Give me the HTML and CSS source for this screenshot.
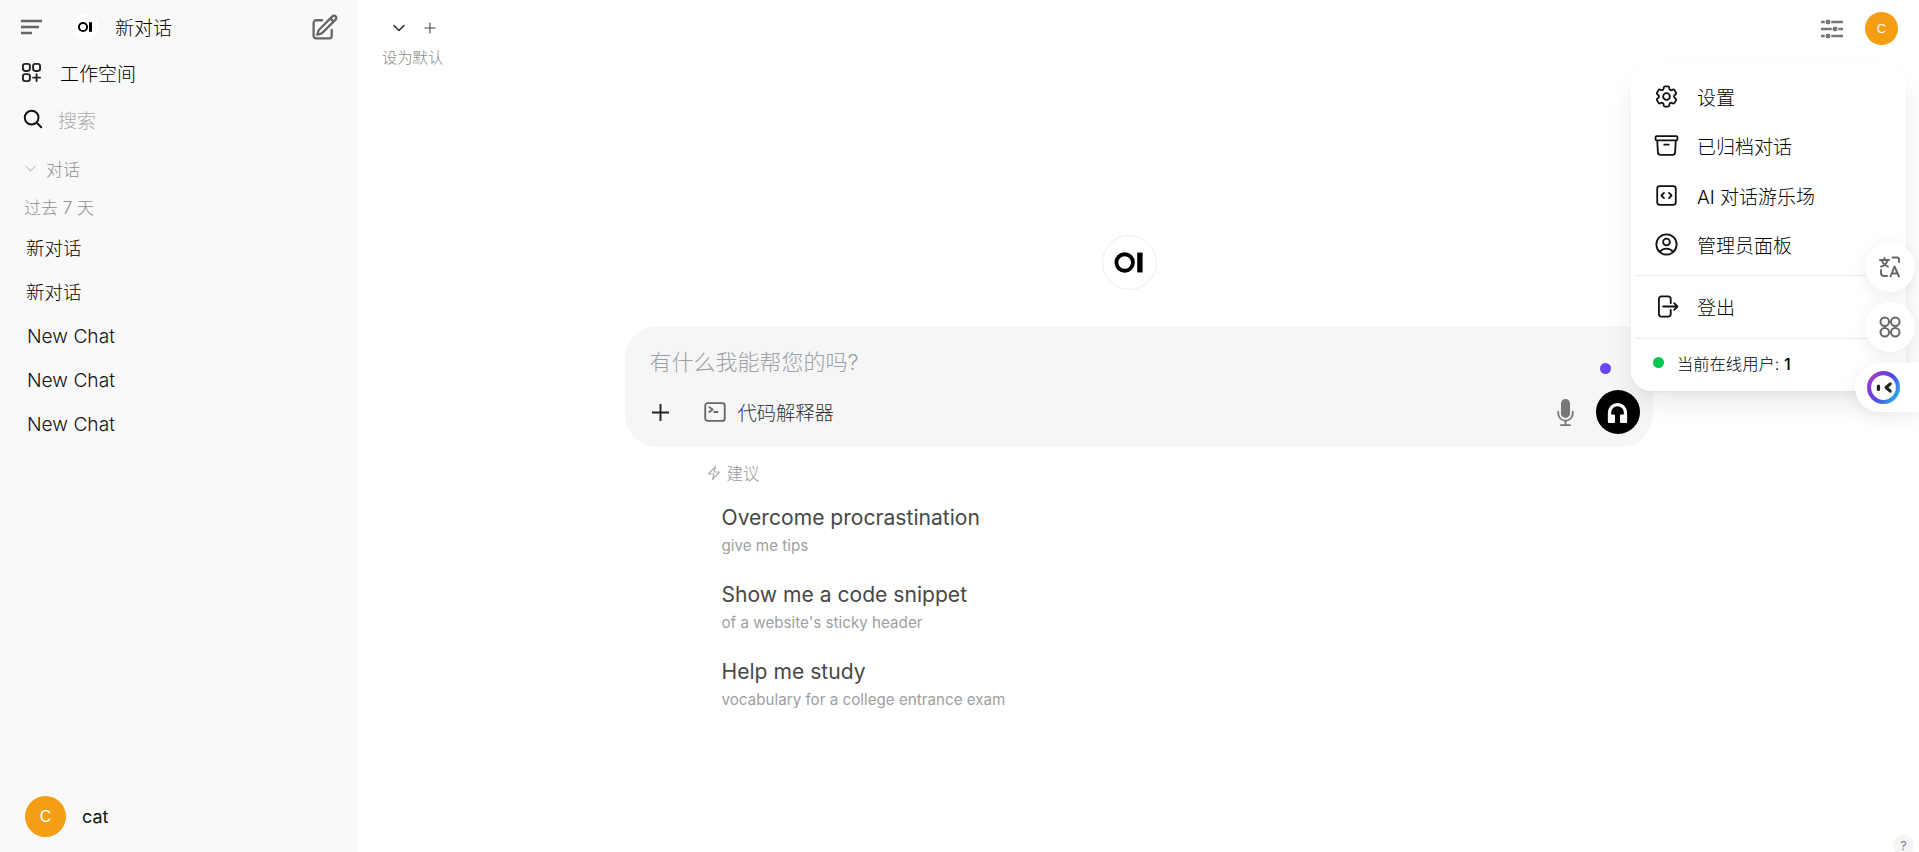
FILE: index.html
```html
<!DOCTYPE html>
<html lang="zh-CN">
<head>
<meta charset="utf-8">
<title>新对话</title>
<link rel="stylesheet" href="styles.css">
</head>
<body>
<div class="app">
  <aside class="sidebar">
    <div class="brand">
      <svg class="hamburger" viewBox="0 0 22 16" fill="none" stroke="#666" stroke-width="2.600"><path d="M0 2h21M0 8h18M0 14h11"/></svg>
      <span class="logo-sm">
        <svg viewBox="0 0 26 26"><circle cx="10" cy="13" r="4.100" fill="none" stroke="#000" stroke-width="2"/><rect x="16" y="8.200" width="3" height="9.600"/></svg>
      </span>
      <span class="brand-name">新对话</span>
      <svg class="edit" viewBox="0 0 24 24" fill="none" stroke="#666" stroke-width="1.900" stroke-linecap="round" stroke-linejoin="round"><path d="m16.862 4.487 1.687-1.688a1.875 1.875 0 1 1 2.652 2.652L10.582 16.070a4.500 4.500 0 0 1-1.897 1.130L6 18l.8-2.685a4.500 4.500 0 0 1 1.130-1.897l8.932-8.931Zm0 0L19.500 7.125M18 14v4.750A2.250 2.250 0 0 1 15.750 21H5.250A2.250 2.250 0 0 1 3 18.750V8.250A2.250 2.250 0 0 1 5.250 6H10"/></svg>
    </div>
    <div class="nav-row workspace">
      <svg class="nav-icon" viewBox="0 0 24 24" fill="none" stroke="#222" stroke-width="1.800" stroke-linecap="round" stroke-linejoin="round"><path d="M13.500 16.875h3.375m0 0h3.375m-3.375 0V13.500m0 3.375v3.375M6 10.500h2.250a2.250 2.250 0 0 0 2.250-2.250V6a2.250 2.250 0 0 0-2.250-2.250H6A2.250 2.250 0 0 0 3.750 6v2.250A2.250 2.250 0 0 0 6 10.500Zm0 9.750h2.250A2.250 2.250 0 0 0 10.500 18v-2.250a2.250 2.250 0 0 0-2.250-2.250H6a2.250 2.250 0 0 0-2.250 2.250V18A2.250 2.250 0 0 0 6 20.250Zm9.750-9.750H18a2.250 2.250 0 0 0 2.250-2.250V6A2.250 2.250 0 0 0 18 3.750h-2.250A2.250 2.250 0 0 0 13.500 6v2.250a2.250 2.250 0 0 0 2.250 2.250Z"/></svg>
      <span>工作空间</span>
    </div>
    <div class="nav-row search">
      <svg class="nav-icon" viewBox="0 0 24 24" fill="none" stroke="#111" stroke-width="2.100" stroke-linecap="round" stroke-linejoin="round"><path d="m21 21-5.197-5.197m0 0A7.500 7.500 0 1 0 5.196 5.196a7.500 7.500 0 0 0 10.607 10.607Z"/></svg>
      <span>搜索</span>
    </div>
    <div class="section-head">
      <svg class="section-chevron" viewBox="0 0 24 24" fill="none" stroke="#c4c4c4" stroke-width="2" stroke-linecap="round" stroke-linejoin="round"><path d="m19.500 8.250-7.500 7.500-7.500-7.500"/></svg>
      <span>对话</span>
    </div>
    <div class="period">过去 7 天</div>
    <ul class="chat-list">
      <li>新对话</li>
      <li>新对话</li>
      <li class="chat-en">New Chat</li>
      <li class="chat-en">New Chat</li>
      <li class="chat-en">New Chat</li>
    </ul>
    <div class="user">
      <span class="avatar avatar-lg">C</span>
      <span class="user-name">cat</span>
    </div>
  </aside>

  <main class="main">
    <header class="topbar">
      <div class="model">
        <div class="model-row">
          <svg class="model-chevron" viewBox="0 0 24 24" fill="none" stroke="#333" stroke-width="2.400" stroke-linecap="round" stroke-linejoin="round"><path d="m19.500 8.250-7.500 7.500-7.500-7.500"/></svg>
          <svg class="model-plus" viewBox="0 0 24 24" fill="none" stroke="#444" stroke-width="2.200" stroke-linecap="round"><path d="M12 2v20M2 12h20"/></svg>
        </div>
        <div class="model-default">设为默认</div>
      </div>
      <div class="top-actions">
        <svg class="sliders" viewBox="0 0 22 20" fill="#777" stroke="#777" stroke-width="2.400"><path d="M0 3h22M0 10h22M0 17h22" fill="none"/><circle cx="7" cy="3" r="3" stroke="#fff" stroke-width="1"/><circle cx="14" cy="10" r="3" stroke="#fff" stroke-width="1"/><circle cx="7" cy="17" r="3" stroke="#fff" stroke-width="1"/></svg>
        <span class="avatar avatar-sm">C</span>
      </div>
    </header>

    <section class="center">
      <div class="logo-lg">
        <svg viewBox="0 0 55 55"><circle cx="22.500" cy="27.500" r="8.600" fill="none" stroke="#000" stroke-width="4"/><rect x="35.500" y="17.200" width="5.600" height="20.600"/></svg>
      </div>
      <div class="composer">
        <div class="placeholder">有什么我能帮您的吗?</div>
        <span class="pulse"></span>
        <div class="composer-tools">
          <svg class="tool-plus" viewBox="0 0 18 18" fill="none" stroke="#222" stroke-width="2"><path d="M9 0v18M0 9h18"/></svg>
          <svg class="tool-term" viewBox="0 0 24 24" fill="none" stroke="#666" stroke-width="1.700" stroke-linecap="round" stroke-linejoin="round"><path d="m6.750 7.500 3 2.250-3 2.250m4.500 0h3m-9 8.250h13.500A2.250 2.250 0 0 0 21 18V6a2.250 2.250 0 0 0-2.250-2.250H5.250A2.250 2.250 0 0 0 3 6v12a2.250 2.250 0 0 0 2.250 2.250Z"/></svg>
          <span class="tool-label">代码解释器</span>
          <svg class="mic" viewBox="0 0 24 24" fill="#777"><path d="M8.250 4.500a3.750 3.750 0 1 1 7.500 0v8.250a3.750 3.750 0 1 1-7.500 0V4.500Z"/><path d="M6 10.500a.75.75 0 0 1 .75.75v1.500a5.250 5.250 0 1 0 10.500 0v-1.500a.75.75 0 0 1 1.500 0v1.500a6.751 6.751 0 0 1-6 6.709v2.291h3a.75.75 0 0 1 0 1.500h-7.500a.75.75 0 0 1 0-1.500h3v-2.291a6.751 6.751 0 0 1-6-6.709v-1.500A.75.75 0 0 1 6 10.500Z"/></svg>
          <span class="voice">
            <svg viewBox="0 0 24 24" fill="#fff"><path d="M2 21v-9a10 10 0 0 1 20 0v9h-3.400v-9a6.600 6.600 0 0 0-13.200 0v9Z"/><rect x="2" y="14" width="7.400" height="9" rx="1.200"/><rect x="14.600" y="14" width="7.400" height="9" rx="1.200"/></svg>
          </span>
        </div>
      </div>
      <div class="suggest">
        <div class="suggest-head">
          <svg viewBox="0 0 24 24" fill="none" stroke="#b0b0b0" stroke-width="1.800" stroke-linejoin="round"><path d="m3.750 13.500 10.500-11.250L12 10.500h8.250L9.750 21.750 12 13.500H3.750Z"/></svg>
          <span>建议</span>
        </div>
        <div class="suggest-item"><div class="suggest-title">Overcome procrastination</div><div class="suggest-sub">give me tips</div></div>
        <div class="suggest-item"><div class="suggest-title">Show me a code snippet</div><div class="suggest-sub">of a website's sticky header</div></div>
        <div class="suggest-item"><div class="suggest-title">Help me study</div><div class="suggest-sub">vocabulary for a college entrance exam</div></div>
      </div>
    </section>
  </main>
</div>

<div class="menu">
  <div class="menu-item">
    <svg viewBox="0 0 24 24"><path d="M9.594 3.940c.09-.542.56-.94 1.110-.94h2.593c.55 0 1.020.398 1.110.94l.213 1.281c.063.374.313.686.645.870.074.040.147.083.22.127.325.196.72.257 1.075.124l1.217-.456a1.125 1.125 0 0 1 1.370.49l1.296 2.247a1.125 1.125 0 0 1-.26 1.431l-1.003.827c-.293.241-.438.613-.43.992a7.723 7.723 0 0 1 0 .255c-.008.378.137.75.43.991l1.004.827c.424.35.534.955.26 1.430l-1.298 2.247a1.125 1.125 0 0 1-1.369.491l-1.217-.456c-.355-.133-.75-.072-1.076.124a6.470 6.470 0 0 1-.22.128c-.331.183-.581.495-.644.869l-.213 1.281c-.09.543-.56.94-1.110.94h-2.594c-.55 0-1.019-.398-1.110-.94l-.213-1.281c-.062-.374-.312-.686-.644-.87a6.520 6.520 0 0 1-.22-.127c-.325-.196-.72-.257-1.076-.124l-1.217.456a1.125 1.125 0 0 1-1.369-.49l-1.297-2.247a1.125 1.125 0 0 1 .26-1.431l1.004-.827c.292-.24.437-.613.43-.991a6.932 6.932 0 0 1 0-.255c.007-.38-.138-.751-.43-.992l-1.004-.827a1.125 1.125 0 0 1-.26-1.430l1.297-2.247a1.125 1.125 0 0 1 1.370-.491l1.216.456c.356.133.751.072 1.076-.124.072-.044.146-.086.22-.128.332-.183.582-.495.644-.869l.214-1.280Z"/><path d="M15 12a3 3 0 1 1-6 0 3 3 0 0 1 6 0Z"/></svg>
    <span>设置</span>
  </div>
  <div class="menu-item">
    <svg viewBox="0 0 24 24"><path d="M20.250 7.500l-.625 10.632a2.250 2.250 0 01-2.247 2.118H6.622a2.250 2.250 0 01-2.247-2.118L3.750 7.500M10 11.250h4M3.375 7.500h17.250c.621 0 1.125-.504 1.125-1.125v-1.500c0-.621-.504-1.125-1.125-1.125H3.375c-.621 0-1.125.504-1.125 1.125v1.500c0 .621.504 1.125 1.125 1.125z"/></svg>
    <span>已归档对话</span>
  </div>
  <div class="menu-item">
    <svg viewBox="0 0 24 24"><path d="M14.250 9.750 16.500 12l-2.250 2.250m-4.500 0L7.500 12l2.250-2.250M6 20.250h12A2.250 2.250 0 0 0 20.250 18V6A2.250 2.250 0 0 0 18 3.750H6A2.250 2.250 0 0 0 3.750 6v12A2.250 2.250 0 0 0 6 20.250Z"/></svg>
    <span>AI 对话游乐场</span>
  </div>
  <div class="menu-item">
    <svg viewBox="0 0 24 24"><path d="M17.982 18.725A7.488 7.488 0 0 0 12 15.750a7.488 7.488 0 0 0-5.982 2.975m11.963 0a9 9 0 1 0-11.963 0m11.963 0A8.966 8.966 0 0 1 12 21a8.966 8.966 0 0 1-5.982-2.275M15 9.750a3 3 0 1 1-6 0 3 3 0 0 1 6 0Z"/></svg>
    <span>管理员面板</span>
  </div>
  <hr class="menu-rule">
  <div class="menu-item logout">
    <svg viewBox="0 0 24 24"><path d="M15.750 9V5.250A2.250 2.250 0 0 0 13.500 3h-6a2.250 2.250 0 0 0-2.250 2.250v13.500A2.250 2.250 0 0 0 7.500 21h6a2.250 2.250 0 0 0 2.250-2.250V15m3 0 3-3m0 0-3-3m3 3H9"/></svg>
    <span>登出</span>
  </div>
  <hr class="menu-rule">
  <div class="online"><span class="online-dot"></span><span class="online-label">当前在线用户: <b>1</b></span></div>
</div>

<button class="float float-translate" type="button" aria-label="翻译">
  <svg viewBox="0 0 24 24" fill="none" stroke="#666" stroke-width="1.900" stroke-linecap="round" stroke-linejoin="round"><path d="M2 5h9M6.500 3v2M9.500 5c-.6 3-3 5.600-6.500 6.700M3.500 5c.8 2.500 3 5 6.500 6.700M14.500 2.500H19a2 2 0 0 1 2 2V7M3 15v3a3 3 0 0 0 3 3h3M12.500 21.500l4-10 4.500 10M14 18.500h5.500"/></svg>
</button>
<button class="float float-grid" type="button" aria-label="应用">
  <svg viewBox="0 0 24 24" fill="none" stroke="#666" stroke-width="2"><rect x="2.500" y="2.500" width="8.500" height="8.500" rx="4.200"/><rect x="13" y="2.500" width="8.500" height="8.500" rx="4.200"/><rect x="2.500" y="13" width="8.500" height="8.500" rx="4.200"/><rect x="13" y="13" width="8.500" height="8.500" rx="4.200"/></svg>
</button>
<div class="float-bot">
  <svg viewBox="0 0 32 32">
    <defs><linearGradient id="ring" x1="0" y1="0.2" x2="1" y2="0.9"><stop offset="0" stop-color="#a13bd0"/><stop offset="0.45" stop-color="#5b3fe0"/><stop offset="1" stop-color="#22b4e8"/></linearGradient></defs>
    <circle cx="16" cy="16" r="14" fill="#fff" stroke="url(#ring)" stroke-width="4"/>
    <rect x="9.500" y="13" width="3.200" height="6.500" rx="1.600" fill="#222"/>
    <path d="M22.500 12.500 18.500 16l4 3.500" fill="none" stroke="#222" stroke-width="3" stroke-linecap="round" stroke-linejoin="round"/>
  </svg>
</div>
<div class="help">?</div>
</body>
</html>
```
FILE: styles.css
```css
* { box-sizing: border-box; }
html, body { margin: 0; height: 100%; }
body {
  font-family: Inter, "Noto Sans CJK SC", sans-serif;
  color: #111;
  background: #fff;
  overflow: hidden;
}
.app { display: flex; height: 852px; }

/* Sidebar */
.sidebar {
  width: 358px;
  flex: none;
  display: flex;
  flex-direction: column;
  background: #f9f9f9;
}
.brand { display: flex; align-items: center; height: 54px; padding: 0 21px; }
.hamburger { width: 22px; height: 16px; flex: none; }
.logo-sm {
  width: 26px; height: 26px; margin-left: 30px; border-radius: 50%;
  background: #fff; flex: none; display: flex;
}
.logo-sm svg { width: 26px; height: 26px; }
.brand-name { margin: 0 0 2px 16px; font-size: 19px; font-weight: 300; color: #000; }
.edit { width: 29px; height: 29px; margin-left: auto; margin-right: -2px; }
.nav-row { display: flex; align-items: center; height: 40px; font-size: 19px; padding-left: 19px; font-weight: 300; color: #000; }
.nav-icon { flex: none; }
.workspace { margin-top: -2px; }
.workspace .nav-icon { width: 25px; height: 25px; }
.workspace span { margin-left: 16px; }
.search { margin-top: 7px; padding-left: 22px; }
.search .nav-icon { width: 22px; height: 22px; }
.search span { margin-left: 14px; color: #aaa; }
.section-head { display: flex; align-items: center; height: 32px; margin-top: 13px; padding-left: 23px; font-size: 17px; font-weight: 300; color: #8f8f8f; }
.section-chevron { width: 15px; height: 15px; flex: none; }
.section-head span { margin-left: 8px; }
.period { height: 32px; margin-top: 8px; padding-left: 24px; font-size: 17px; font-weight: 300; line-height: 32px; color: #8f8f8f; }
.chat-list { list-style: none; margin: 2px 0 0; padding: 0; }
.chat-list li { height: 44px; line-height: 44px; padding-left: 26px; font-size: 18.500px; font-weight: 300; color: #000; }
.chat-list .chat-en { padding-left: 27px; font-size: 19.200px; color: #111; }
.user { display: flex; align-items: center; margin-top: auto; padding: 0 0 15px 25px; }
.avatar {
  display: flex; align-items: center; justify-content: center;
  border-radius: 50%; background: #f59e13; color: #fff; flex: none;
  font-family: "Liberation Sans", sans-serif;
}
.avatar-lg { width: 41px; height: 41px; font-size: 16px; }
.avatar-sm { width: 33px; height: 33px; font-size: 13px; }
.user-name { margin-left: 16px; font-size: 18px; font-weight: 400; }

/* Main */
.main { flex: 1; min-width: 0; display: flex; flex-direction: column; }
.topbar { display: flex; justify-content: space-between; padding: 12px 21px 0 24px; height: 74px; }
.model-row { display: flex; align-items: center; height: 32px; padding-left: 10px; }
.model-chevron { width: 16px; height: 16px; margin-left: -1px; }
.model-plus { width: 12px; height: 12px; margin-left: 17px; }
.model-default { font-size: 15.300px; font-weight: 300; line-height: 22px; color: #8a8a8a; margin-top: 3px; }
.top-actions { display: flex; align-items: flex-start; }
.sliders { width: 22px; height: 20px; margin-top: 7px; }
.avatar-sm { margin-left: 22px; }

.center { display: flex; flex-direction: column; align-items: center; }
.logo-lg {
  width: 55px; height: 55px; margin: 161px 18px 0 0; border: 1px solid #ececec;
  border-radius: 50%; background: #fff;
}
.logo-lg svg { display: block; width: 53px; height: 53px; }
.composer {
  position: relative;
  width: 1028px; height: 121px; margin-top: 36px; padding: 21px 13px 0 25px;
  border-radius: 32px; background: #f6f6f6;
}
.placeholder { font-size: 22px; font-weight: 300; line-height: 30px; color: #9aa0a6; }
.pulse { position: absolute; left: 975px; top: 37px; width: 11px; height: 11px; border-radius: 50%; background: #6b46f0; }
.composer-tools { display: flex; align-items: center; height: 44px; margin-top: 13px; }
.tool-plus { width: 17px; height: 17px; margin-left: 2px; flex: none; }
.tool-term { width: 26px; height: 26px; margin-left: 33px; flex: none; }
.tool-label { margin-left: 10px; font-size: 19.300px; font-weight: 300; color: #333; }
.mic { width: 29px; height: 29px; margin-left: auto; flex: none; }
.voice {
  width: 44px; height: 44px; margin-left: 16px; border-radius: 50%; background: #000; flex: none;
  display: flex; align-items: center; justify-content: center;
}
.voice svg { width: 23px; height: 23px; }

.suggest { width: 1028px; padding: 14px 0 0 81px; }
.suggest-head { display: flex; align-items: center; height: 24px; font-size: 16.500px; font-weight: 300; color: #999; }
.suggest-head svg { width: 16px; height: 16px; margin-right: 5px; }
.suggest-item { padding-left: 16px; height: 77px; }
.suggest-head + .suggest-item { margin-top: 19px; }
.suggest-title { font-size: 21.100px; line-height: 28px; color: #484848; }
.suggest-sub { font-size: 15.200px; line-height: 24px; color: #a0a0a0; margin-top: 2px; }

/* Overlays */
.menu {
  position: absolute; left: 1631px; top: 65px; width: 275px; height: 326px;
  padding: 7px 5px 0; border-radius: 20px; background: #fff;
  box-shadow: 0 14px 28px -4px rgba(0,0,0,.10), 0 3px 5px -2px rgba(0,0,0,.06);
  color: #000;
}
.menu-item { display: flex; align-items: center; height: 49.300px; padding-left: 17px; font-size: 19px; font-weight: 300; }
.menu-item svg { width: 27px; height: 27px; fill: none; stroke: #111; stroke-width: 1.600; stroke-linecap: round; stroke-linejoin: round; flex: none; }
.menu-item span { margin-left: 17px; }
.menu-rule { margin: 6px 0 0; border: 0; border-top: 1px solid #ececec; }
.logout { height: 49px; margin-top: 6px; margin-bottom: 7px; }
.logout + .menu-rule { margin-top: 0; }
.online { display: flex; align-items: center; height: 47px; padding-left: 17px; font-size: 16.300px; font-weight: 300; }
.online-dot { width: 11px; height: 11px; border-radius: 50%; background: #00c853; flex: none; }
.online-label { margin-left: 13px; }
.online-label b { font-weight: 500; }

.float {
  position: absolute; width: 50px; height: 50px; padding: 0; border: 0; border-radius: 50%;
  background: #fff; box-shadow: 0 4px 18px rgba(0,0,0,.08);
  display: flex; align-items: center; justify-content: center;
}
.float svg { width: 24px; height: 24px; }
.float-translate { left: 1865px; top: 242px; }
.float-grid { left: 1865px; top: 302px; }
.float-bot {
  position: absolute; left: 1855px; top: 363px; width: 64px; height: 49px; padding: 8px 0 0 12px;
  border-radius: 25px 0 0 25px; background: #fff; box-shadow: 0 4px 18px rgba(0,0,0,.08);
}
.float-bot svg { display: block; width: 33px; height: 33px; }
.help {
  position: absolute; left: 1893px; top: 835px; width: 21px; height: 21px; border-radius: 50%;
  background: #f5f5f5; color: #777; font-size: 12px; line-height: 22px; text-align: center;
}
```
